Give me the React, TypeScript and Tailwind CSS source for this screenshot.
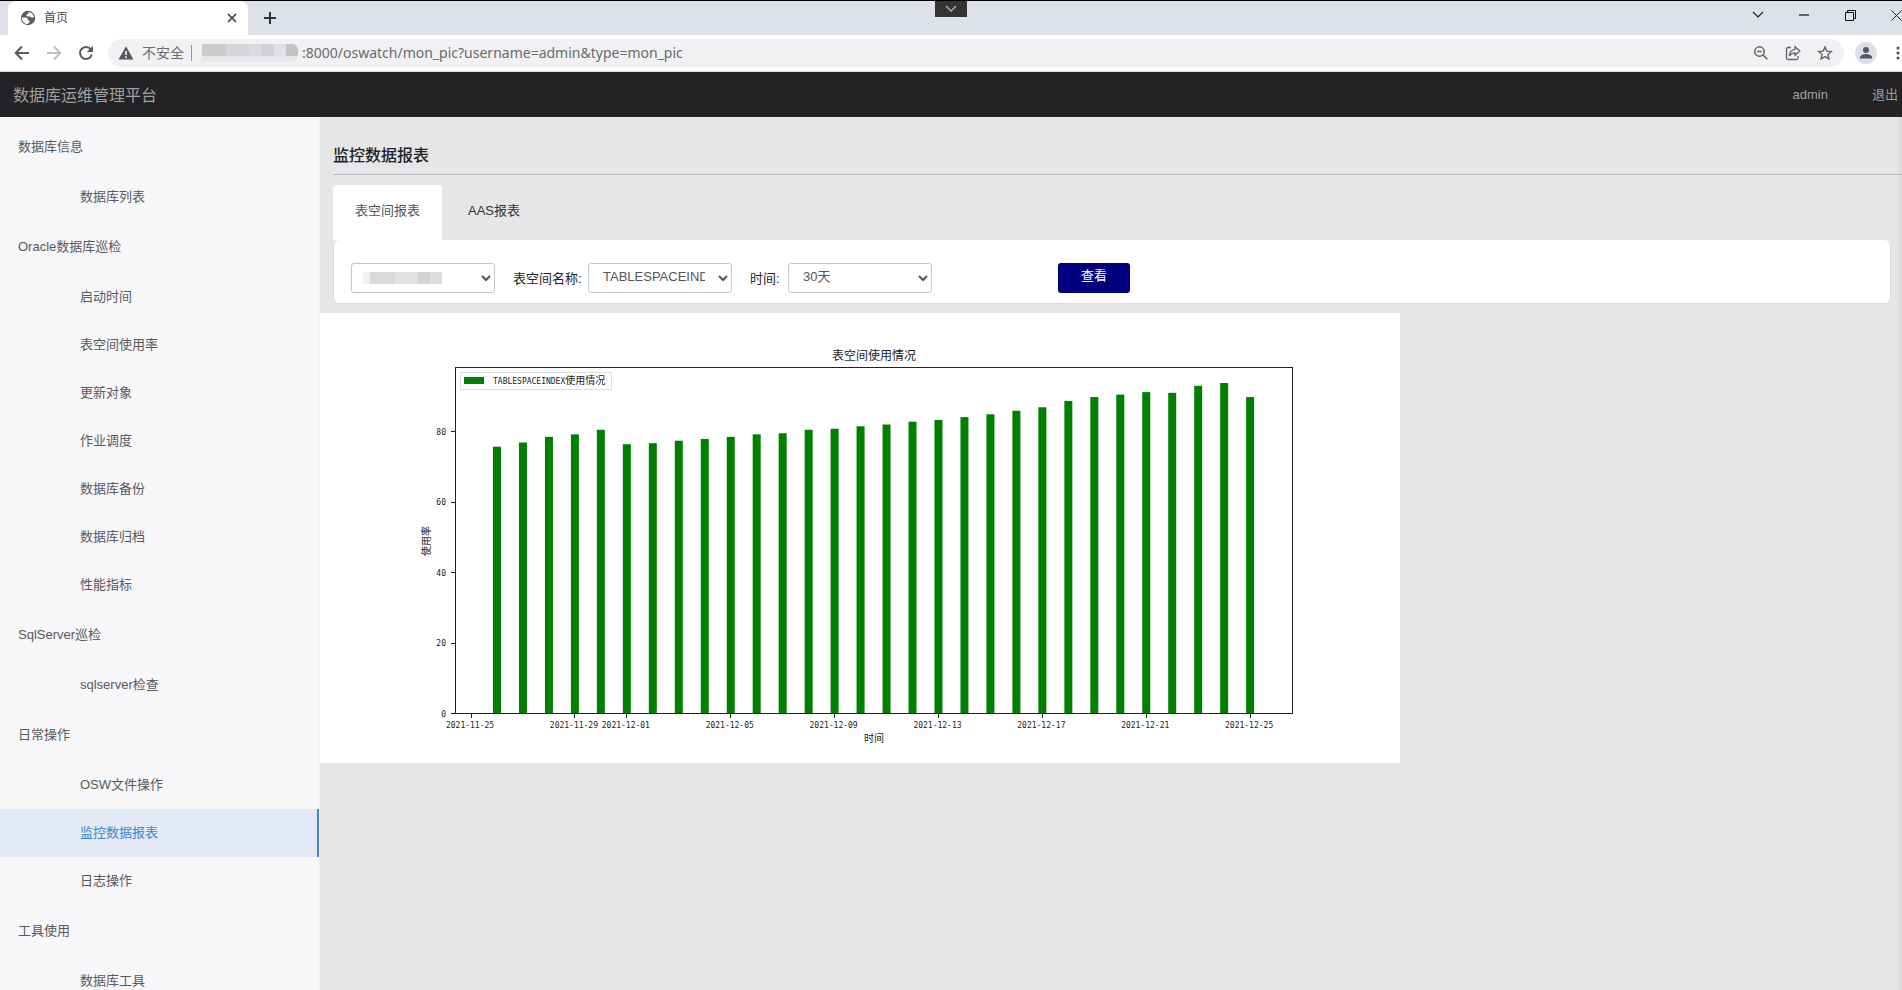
import React from "react";

const menu: { title: string; items: string[] }[] = [
  { title: "数据库信息", items: ["数据库列表"] },
  {
    title: "Oracle数据库巡检",
    items: ["启动时间", "表空间使用率", "更新对象", "作业调度", "数据库备份", "数据库归档", "性能指标"],
  },
  { title: "SqlServer巡检", items: ["sqlserver检查"] },
  { title: "日常操作", items: ["OSW文件操作", "监控数据报表", "日志操作"] },
  { title: "工具使用", items: ["数据库工具"] },
];
const activeItem = "监控数据报表";

const usage = [
  75.8, 77, 78.6, 79.3, 80.6, 76.5, 76.8, 77.5, 78, 78.6, 79.3, 79.6, 80.6, 80.9, 81.6, 82.1, 82.9, 83.4, 84.2,
  85, 86, 87, 88.8, 89.9, 90.6, 91.3, 91.1, 93.1, 93.9, 89.9,
];
const dateTicks: [number, string][] = [
  [-1, "2021-11-25"],
  [3, "2021-11-29"],
  [5, "2021-12-01"],
  [9, "2021-12-05"],
  [13, "2021-12-09"],
  [17, "2021-12-13"],
  [21, "2021-12-17"],
  [25, "2021-12-21"],
  [29, "2021-12-25"],
];
const dayX = (day: number) => 177 + day * 25.97;
const valueY = (value: number) => 400.5 - value * 3.52;

function TabStrip() {
  return (
    <div className="flex h-[35px] shrink-0 items-end border-t border-black bg-[#dee1e8]">
      <div className="ml-2 flex h-[34px] w-60 items-center rounded-t-lg bg-white pl-3 pr-2">
        <svg width="16" height="16" viewBox="0 0 16 16" aria-hidden="true">
          <circle cx="8" cy="8" r="7.2" fill="#5a5d62" />
          <path
            d="M1.800 7.400h3.700c1.600 0 2.400.9 2.400 2v1h1.700c.3 1.500-.8 3-2.300 3.600C4.300 13.700 1.600 11 1.800 7.400zM8.300 2.200c2.500 0 4.900 1.500 5.600 4.200-.4 1.200-1.600 1.700-2.600 1.100l-1.200-.9H7.600c-1.200-.2-1.500-2-.3-2.500l1.200-.3z"
            fill="#fff"
          />
        </svg>
        <span className="ml-2 grow text-xs text-[#45484d]">首页</span>
        <button aria-label="关闭标签页" className="flex size-4 items-center justify-center">
          <svg width="10" height="10" viewBox="0 0 10 10" stroke="#3c4043" strokeWidth="1.700">
            <path d="M1 1l8 8M9 1L1 9" />
          </svg>
        </button>
      </div>
      <button aria-label="新标签页" className="ml-[14px] flex h-[34px] w-4 items-center justify-center">
        <svg width="14" height="14" viewBox="0 0 14 14" stroke="#303236" strokeWidth="2">
          <path d="M7 1v12M1 7h12" />
        </svg>
      </button>
      <div className="flex grow justify-center self-start">
        <button aria-label="展开" className="mr-[127px] flex h-4 w-8 items-center justify-center bg-[#333]">
          <svg width="12" height="8" viewBox="0 0 12 8" fill="none" stroke="#b5b5b5" strokeWidth="1.300">
            <path d="M1 1l5 5 5-5" />
          </svg>
        </button>
      </div>
      <div className="-mr-[2px] flex items-center gap-[30px] self-start pt-[6px]">
        <button aria-label="搜索标签页" className="flex size-4 items-center justify-center">
          <svg width="12" height="8" viewBox="0 0 12 8" fill="none" stroke="#222" strokeWidth="1.200">
            <path d="M1 1l5 5 5-5" />
          </svg>
        </button>
        <button aria-label="最小化" className="flex size-4 items-center justify-center">
          <svg width="10" height="2" viewBox="0 0 10 2">
            <path d="M0 1h10" stroke="#111" strokeWidth="1.200" />
          </svg>
        </button>
        <button aria-label="还原" className="flex size-4 items-center justify-center">
          <svg width="11" height="11" viewBox="0 0 11 11" fill="none" stroke="#111">
            <path d="M.5 2.500h8v8h-8zM2.500 2.500v-2h8v8h-2" />
          </svg>
        </button>
        <button aria-label="关闭" className="flex size-4 items-center justify-center">
          <svg width="11" height="11" viewBox="0 0 11 11" stroke="#222">
            <path d="M.5.5l10 10M10.500.5l-10 10" />
          </svg>
        </button>
      </div>
    </div>
  );
}

function Toolbar() {
  return (
    <div className="flex h-[37px] shrink-0 items-center border-b border-[#d5d9dc] bg-white pl-[14px]">
      <div className="flex gap-4">
        <button aria-label="后退">
          <svg width="16" height="16" viewBox="0 0 16 16" fill="none" stroke="#55585c" strokeWidth="2">
            <path d="M15 8H2M8 1.500L1.700 8 8 14.500" />
          </svg>
        </button>
        <button aria-label="前进">
          <svg width="16" height="16" viewBox="0 0 16 16" fill="none" stroke="#bcbec0" strokeWidth="2">
            <path d="M1 8h13M8 1.500L14.300 8 8 14.500" />
          </svg>
        </button>
        <button aria-label="重新加载">
          <svg width="16" height="16" viewBox="0 0 16 16">
            <path d="M12.700 4.200A6 6 0 1 0 13.800 9.500" fill="none" stroke="#55585c" strokeWidth="2" />
            <path d="M15 .8v6.200H8.800z" fill="#55585c" />
          </svg>
        </button>
      </div>
      <div className="ml-[14px] flex h-7 grow items-center rounded-full bg-[#f1f1f4] pl-[10px] pr-[11px] font-['Noto_Sans','Noto_Sans_CJK_SC',sans-serif] text-[#686b6f]">
        <svg width="16" height="14" viewBox="0 0 16 14" aria-hidden="true">
          <path d="M8 .3L15.500 13.500H.5z" fill="#55585c" />
          <path d="M8 5v4M8 10.300v1.700" stroke="#fff" strokeWidth="1.500" />
        </svg>
        <span className="ml-2 text-sm">不安全</span>
        <span className="ml-[7px] h-4 w-px bg-[#909296]" />
        <span className="ml-[10px] flex h-[18px] overflow-hidden rounded-r-md bg-[#e7e7eb]">
          <span className="h-3 w-6 bg-[#cbcdcd]" />
          <span className="h-3 w-6 bg-[#d5d6d7]" />
          <span className="h-3 w-3 bg-[#dad9dd]" />
          <span className="h-3 w-3 bg-[#cfd3d4]" />
          <span className="h-3 w-3 bg-[#e0e0e6]" />
          <span className="h-3 w-3 bg-[#c3c3c4]" />
        </span>
        <span className="ml-1 grow text-sm">:8000/oswatch/mon_pic?username=admin&amp;type=mon_pic</span>
        <div className="flex items-center gap-4">
          <button aria-label="缩放">
            <svg width="16" height="16" viewBox="0 0 16 16" fill="none" stroke="#5f6368" strokeWidth="1.500">
              <circle cx="6.500" cy="6.500" r="4.700" />
              <path d="M10 10l4.300 4.300M4.300 6.500h4.400" />
            </svg>
          </button>
          <button aria-label="分享">
            <svg width="16" height="16" viewBox="0 0 16 16" fill="none" stroke="#5f6368" strokeWidth="1.300">
              <path d="M6 2.500H3A1.500 1.500 0 0 0 1.500 4v9A1.500 1.500 0 0 0 3 14.500h8.500A1.500 1.500 0 0 0 13 13v-2" />
              <path d="M10 1.800L14.800 6 10 10.200V7.800C7 7.800 5.500 9 4.300 11 4.500 7.500 6.500 4.700 10 4.300z" />
            </svg>
          </button>
          <button aria-label="收藏">
            <svg width="16" height="16" viewBox="0 0 16 16" fill="none" stroke="#5f6368" strokeWidth="1.400">
              <path d="M8 2l1.800 4.100 4.500.4-3.400 3 1 4.400L8 11.600l-3.900 2.300 1-4.400-3.400-3 4.500-.4z" />
            </svg>
          </button>
        </div>
      </div>
      <button aria-label="用户" className="ml-[11px] flex size-[22px] items-center justify-center rounded-full bg-[#dcdfe5]">
        <svg width="14" height="14" viewBox="0 0 14 14" fill="#555a64">
          <circle cx="7" cy="4" r="3" />
          <path d="M1 12.500V11c0-2 4-3 6-3s6 1 6 3v1.500z" />
        </svg>
      </button>
      <button aria-label="更多" className="ml-[19px] mr-[2px]">
        <svg width="4" height="14" viewBox="0 0 4 14" fill="#4a4d51">
          <circle cx="2" cy="2" r="1.500" />
          <circle cx="2" cy="7" r="1.500" />
          <circle cx="2" cy="12" r="1.500" />
        </svg>
      </button>
    </div>
  );
}

function Sidebar() {
  return (
    <nav className="w-80 shrink-0 overflow-hidden border-r border-[#f0eff3] bg-[#f7f6f9] pt-1 text-[#58595c]">
      {menu.map((group) => (
        <div key={group.title}>
          <h2 className="flex h-[52px] items-center pl-[18px]">{group.title}</h2>
          <ul>
            {group.items.map((item) => (
              <li key={item}>
                <a
                  href="#"
                  className={
                    item === activeItem
                      ? "flex h-12 items-center border-r-2 border-[#4285d0] bg-[#e2e9f4] pl-20 text-[#4186cf]"
                      : "flex h-12 items-center pl-20"
                  }
                >
                  {item}
                </a>
              </li>
            ))}
          </ul>
        </div>
      ))}
    </nav>
  );
}

const selectClass =
  "h-[30px] w-36 rounded-[3px] border border-[#c6c6c8] bg-white px-[10px] pb-[2px] text-[#555]";

function Filters() {
  return (
    <form className="mr-[7px] flex h-16 items-center rounded-md border border-t-0 border-[#dcdcde] bg-white pl-[17px] pt-3 text-[#222]">
      <div className="relative">
        <select aria-label="数据库" className={selectClass}>
          <option value="" aria-label="数据库" />
        </select>
        <span className="pointer-events-none absolute left-3 top-[9px] flex">
          <span className="h-3 w-[7px] bg-[#f3f0f0]" />
          <span className="h-3 w-3 bg-[#d9dade]" />
          <span className="h-3 w-3 bg-[#dad8d9]" />
          <span className="h-3 w-6 bg-[#e1e1e1]" />
          <span className="h-3 w-3 bg-[#d0d2d5]" />
          <span className="h-3 w-3 bg-[#dddddd]" />
        </span>
      </div>
      <label htmlFor="space" className="ml-[18px] w-[75px] whitespace-nowrap pt-[3px]">
        表空间名称:
      </label>
      <select id="space" className={selectClass}>
        <option>TABLESPACEINDEX</option>
      </select>
      <label htmlFor="period" className="ml-[18px] w-[38px] whitespace-nowrap pt-[3px]">
        时间:
      </label>
      <select id="period" className={selectClass}>
        <option>30天</option>
      </select>
      <button type="button" className="ml-[126px] h-[30px] w-[72px] rounded-[3px] bg-[#000080] pb-1 text-white">
        查看
      </button>
    </form>
  );
}

function UsageChart() {
  return (
    <svg
      width="1080"
      height="450"
      viewBox="0 0 1080 450"
      role="img"
      aria-label="表空间使用情况"
      className="bg-white font-['Noto_Sans_CJK_SC',sans-serif] text-[10px]"
      fill="#222"
    >
      <text x="554" y="47" textAnchor="middle" className="text-xs">
        表空间使用情况
      </text>
      {usage.map((value, day) => (
        <rect key={day} x={dayX(day) - 4} y={valueY(value)} width="8" height={value * 3.52} fill="#008000" />
      ))}
      <rect x="135.500" y="54.500" width="837" height="346" fill="none" stroke="#222" />
      {[0, 20, 40, 60, 80].map((value) => (
        <g key={value}>
          <path d={`M131 ${Math.floor(valueY(value)) + 0.5}h4`} stroke="#222" />
          <text
            x="126"
            y={valueY(value) + 3}
            textAnchor="end"
            className="font-['DejaVu_Sans_Mono',monospace] text-[8px]"
          >
            {value}
          </text>
        </g>
      ))}
      {dateTicks.map(([day, label]) => (
        <g key={label}>
          <path d={`M${Math.floor(dayX(day)) + 0.5} 401v4`} stroke="#222" />
          <text
            x={dayX(day) - 1}
            y="415"
            textAnchor="middle"
            className="font-['DejaVu_Sans_Mono',monospace] text-[8px]"
          >
            {label}
          </text>
        </g>
      ))}
      <text x="554" y="429" textAnchor="middle">
        时间
      </text>
      <text transform="translate(110 228) rotate(-90)" textAnchor="middle">
        使用率
      </text>
      <rect x="140.500" y="59.500" width="151" height="17" fill="#fff" stroke="#ddd" />
      <rect x="144" y="64" width="20" height="7" fill="#008000" />
      <text x="173" y="71">
        <tspan className="font-['DejaVu_Sans_Mono',monospace] text-[8px]">TABLESPACEINDEX</tspan>
        使用情况
      </text>
    </svg>
  );
}

export default function App() {
  return (
    <div className="flex h-screen flex-col overflow-hidden bg-[#e6e6e8] font-['Liberation_Sans','Noto_Sans_CJK_SC',sans-serif] text-[13px]">
      <TabStrip />
      <Toolbar />
      <header className="flex h-[45px] shrink-0 items-center justify-between bg-[#232224] pl-[13px] pr-1 text-[#a0a0a2]">
        <h1 className="pt-[2px] text-base">数据库运维管理平台</h1>
        <div className="flex gap-[44px]">
          <a href="#">admin</a>
          <a href="#">退出</a>
        </div>
      </header>
      <div className="flex min-h-0 grow">
        <Sidebar />
        <main className="min-w-0 grow border-r-4 border-[#dddddf]">
          <div className="pl-[13px]">
            <h2 className="-mr-1 h-[58px] border-b border-[#b9b9bb] pt-[27px] text-base font-medium text-[#222]">
              监控数据报表
            </h2>
            <div className="mt-[10px] flex text-[#333]">
              <button className="h-[55px] w-[109px] rounded-t bg-white pb-1 text-[#555]">表空间报表</button>
              <button className="ml-[26px] h-[55px] pb-1">AAS报表</button>
            </div>
            <Filters />
          </div>
          <div className="mt-[9px]">
            <UsageChart />
          </div>
        </main>
      </div>
    </div>
  );
}
